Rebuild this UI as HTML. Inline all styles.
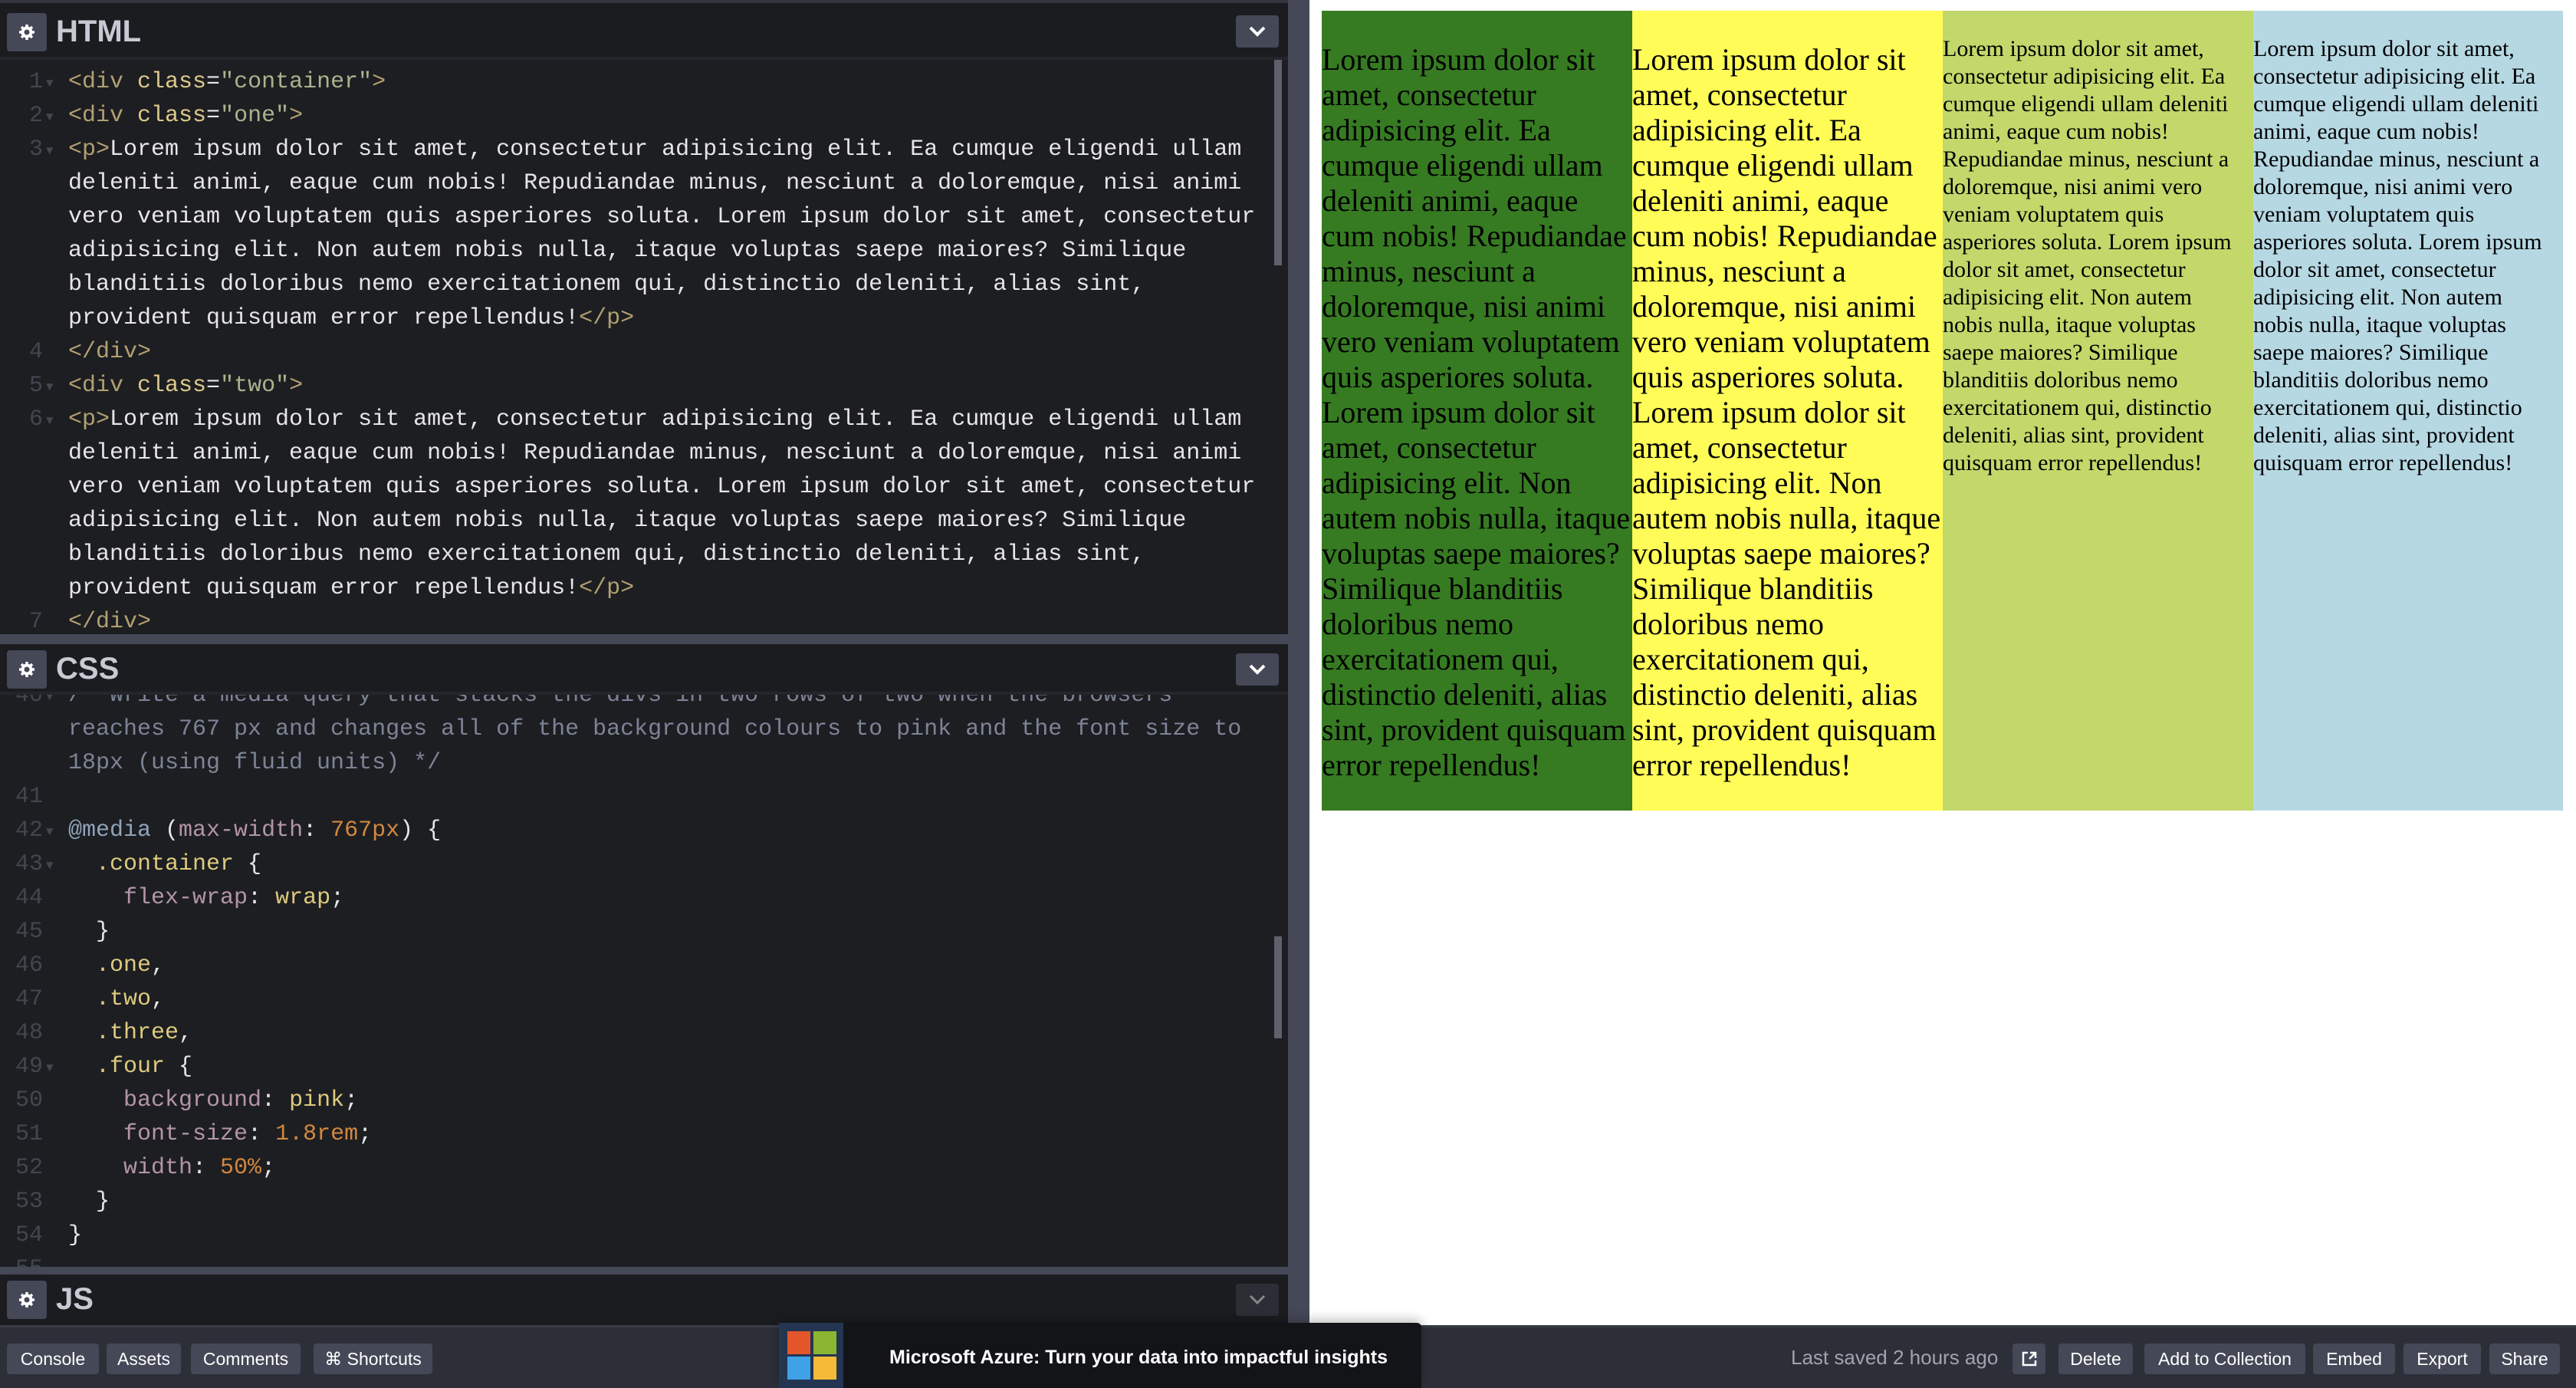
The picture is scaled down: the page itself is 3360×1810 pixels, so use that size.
<!DOCTYPE html>
<html><head><meta charset="utf-8">
<style>
*{margin:0;padding:0;box-sizing:border-box}
body{width:3360px;height:1810px;overflow:hidden;background:#fff;position:relative;font-family:"Liberation Sans",sans-serif}
.abs{position:absolute}
.pane{position:absolute;left:0;width:1680px;background:#1d1e22;overflow:hidden}
.hdr{position:absolute;left:0;width:1680px;background:#1b1c20;border-bottom:4px solid #25262b}
.gear{position:absolute;left:9px;width:52px;height:50px;background:#444857;border-radius:4px}
.gear svg{position:absolute;left:15px;top:14px}
.ttl{position:absolute;left:73px;color:#c7c9d3;font-size:40px;font-weight:bold}
.chev{position:absolute;left:1612px;width:56px;height:42px;background:#444857;border-radius:4px}
.chev svg{position:absolute;left:16px;top:11px}
.code{position:absolute;left:0;width:1660px;font-family:"Liberation Mono",monospace;font-size:30px;line-height:44px;white-space:pre;color:#e6e6e6}
.ln{position:absolute;left:0;width:56px;text-align:right;color:#44464f}
.fd{position:absolute;left:60px;color:#44464f;font-size:16px}
.tx{position:absolute;left:89px}
.tg{color:#b2a071}.at{color:#dcc98a}.vl{color:#a7b58c}
.cm{color:#7c8496}.kw{color:#8fa4ba}.pr{color:#b394aa}.yv{color:#ddca7e}.nm{color:#d2883e}
.sb{position:absolute;left:1662px;width:10px;background:#5e616d}
.col{position:absolute;top:14px;height:1043px;width:405px;font-family:"Liberation Serif",serif;color:#000;white-space:nowrap}
.big{font-size:40px;line-height:46px;padding-top:41px}
.sm{font-size:30px;line-height:36px;padding-top:32px}
.btn{position:absolute;top:1752px;height:40px;background:#444857;border-radius:4px;color:#fff;font-size:23px;line-height:40px;text-align:center}
</style></head><body>
<svg width="0" height="0" style="position:absolute"><defs><g id="g"><circle cx="11" cy="11" r="5.5" fill="none" stroke="#fff" stroke-width="4"/><path d="M11 1v5M11 16v5M1 11h5M16 11h5M4 4l3.5 3.5M14.5 14.5L18 18M18 4l-3.5 3.5M7.5 14.5L4 18" stroke="#fff" stroke-width="3.5"/></g></defs></svg>
<div class="abs" style="left:0;top:0;width:1680px;height:4px;background:#33353d"></div>
<!-- HTML pane -->
<div class="pane" style="top:4px;height:823px;">
  <div class="code" style="top:81px">
    <div class="ln" style="top:0">1</div><div class="fd" style="top:2px">▼</div>
    <div class="ln" style="top:44px">2</div><div class="fd" style="top:46px">▼</div>
    <div class="ln" style="top:88px">3</div><div class="fd" style="top:90px">▼</div>
    <div class="ln" style="top:352px">4</div>
    <div class="ln" style="top:396px">5</div><div class="fd" style="top:398px">▼</div>
    <div class="ln" style="top:440px">6</div><div class="fd" style="top:442px">▼</div>
    <div class="ln" style="top:704px">7</div>
    <div class="tx" style="top:0"><span class="tg">&lt;div</span> <span class="at">class</span>=<span class="vl">"container"</span><span class="tg">&gt;</span>
<span class="tg">&lt;div</span> <span class="at">class</span>=<span class="vl">"one"</span><span class="tg">&gt;</span>
<span class="tg">&lt;p&gt;</span>Lorem ipsum dolor sit amet, consectetur adipisicing elit. Ea cumque eligendi ullam
deleniti animi, eaque cum nobis! Repudiandae minus, nesciunt a doloremque, nisi animi
vero veniam voluptatem quis asperiores soluta. Lorem ipsum dolor sit amet, consectetur
adipisicing elit. Non autem nobis nulla, itaque voluptas saepe maiores? Similique
blanditiis doloribus nemo exercitationem qui, distinctio deleniti, alias sint,
provident quisquam error repellendus!<span class="tg">&lt;/p&gt;</span>
<span class="tg">&lt;/div&gt;</span>
<span class="tg">&lt;div</span> <span class="at">class</span>=<span class="vl">"two"</span><span class="tg">&gt;</span>
<span class="tg">&lt;p&gt;</span>Lorem ipsum dolor sit amet, consectetur adipisicing elit. Ea cumque eligendi ullam
deleniti animi, eaque cum nobis! Repudiandae minus, nesciunt a doloremque, nisi animi
vero veniam voluptatem quis asperiores soluta. Lorem ipsum dolor sit amet, consectetur
adipisicing elit. Non autem nobis nulla, itaque voluptas saepe maiores? Similique
blanditiis doloribus nemo exercitationem qui, distinctio deleniti, alias sint,
provident quisquam error repellendus!<span class="tg">&lt;/p&gt;</span>
<span class="tg">&lt;/div&gt;</span></div>
  </div>
  <div class="sb" style="top:72px;height:270px"></div>
</div>
<div class="hdr" style="top:4px;height:74px">
  <div class="gear" style="top:13px"><svg width="22" height="22"><use href="#g"/></svg></div><div class="ttl" style="top:15px">HTML</div>
  <div class="chev" style="top:16px"><svg width="24" height="20" viewBox="0 0 24 20"><path d="M3 5 L12 14 L21 5" stroke="#fff" stroke-width="4" fill="none"/></svg></div>
</div>
<div class="abs" style="left:0;top:827px;width:1680px;height:13px;background:#444857"></div>
<!-- CSS pane -->
<div class="pane" style="top:906px;height:748px;">
  <div class="code" style="top:-21px">
    <div class="ln" style="top:0">40</div><div class="fd" style="top:2px">▼</div>
    <div class="ln" style="top:132px">41</div>
    <div class="ln" style="top:176px">42</div><div class="fd" style="top:178px">▼</div>
    <div class="ln" style="top:220px">43</div><div class="fd" style="top:222px">▼</div>
    <div class="ln" style="top:264px">44</div>
    <div class="ln" style="top:308px">45</div>
    <div class="ln" style="top:352px">46</div>
    <div class="ln" style="top:396px">47</div>
    <div class="ln" style="top:440px">48</div>
    <div class="ln" style="top:484px">49</div><div class="fd" style="top:486px">▼</div>
    <div class="ln" style="top:528px">50</div>
    <div class="ln" style="top:572px">51</div>
    <div class="ln" style="top:616px">52</div>
    <div class="ln" style="top:660px">53</div>
    <div class="ln" style="top:704px">54</div>
    <div class="ln" style="top:748px">55</div>
    <div class="tx" style="top:0"><span class="cm">/* Write a media query that stacks the divs in two rows of two when the browsers
reaches 767 px and changes all of the background colours to pink and the font size to
18px (using fluid units) */</span>

<span class="kw">@media</span> (<span class="pr">max-width</span>: <span class="nm">767px</span>) {
  <span class="yv">.container</span> {
    <span class="pr">flex-wrap</span>: <span class="yv">wrap</span>;
  }
  <span class="yv">.one</span>,
  <span class="yv">.two</span>,
  <span class="yv">.three</span>,
  <span class="yv">.four</span> {
    <span class="pr">background</span>: <span class="yv">pink</span>;
    <span class="pr">font-size</span>: <span class="nm">1.8rem</span>;
    <span class="pr">width</span>: <span class="nm">50%</span>;
  }
}</div>
  </div>
  <div class="sb" style="top:315px;height:133px"></div>
</div>
<div class="hdr" style="top:840px;height:66px">
  <div class="gear" style="top:8px"><svg width="22" height="22"><use href="#g"/></svg></div><div class="ttl" style="top:10px">CSS</div>
  <div class="chev" style="top:12px"><svg width="24" height="20" viewBox="0 0 24 20"><path d="M3 5 L12 14 L21 5" stroke="#fff" stroke-width="4" fill="none"/></svg></div>
</div>
<div class="abs" style="left:0;top:1652px;width:1680px;height:10px;background:#444857"></div>
<div class="hdr" style="top:1662px;height:66px;border-bottom:none">
  <div class="gear" style="top:8px"><svg width="22" height="22"><use href="#g"/></svg></div><div class="ttl" style="top:10px">JS</div>
  <div class="chev" style="top:12px;background:#2c2e36"><svg width="24" height="20" viewBox="0 0 24 20"><path d="M3 5 L12 14 L21 5" stroke="#888" stroke-width="3" fill="none"/></svg></div>
</div>
<!-- separator -->
<div class="abs" style="left:1680px;top:0;width:28px;height:1730px;background:#454857"></div>
<!-- preview -->
<div class="col big" style="left:1724px;background:#367b22">Lorem ipsum dolor sit<br>amet, consectetur<br>adipisicing elit. Ea<br>cumque eligendi ullam<br>deleniti animi, eaque<br>cum nobis! Repudiandae<br>minus, nesciunt a<br>doloremque, nisi animi<br>vero veniam voluptatem<br>quis asperiores soluta.<br>Lorem ipsum dolor sit<br>amet, consectetur<br>adipisicing elit. Non<br>autem nobis nulla, itaque<br>voluptas saepe maiores?<br>Similique blanditiis<br>doloribus nemo<br>exercitationem qui,<br>distinctio deleniti, alias<br>sint, provident quisquam<br>error repellendus!</div>
<div class="col big" style="left:2129px;background:#fffb57">Lorem ipsum dolor sit<br>amet, consectetur<br>adipisicing elit. Ea<br>cumque eligendi ullam<br>deleniti animi, eaque<br>cum nobis! Repudiandae<br>minus, nesciunt a<br>doloremque, nisi animi<br>vero veniam voluptatem<br>quis asperiores soluta.<br>Lorem ipsum dolor sit<br>amet, consectetur<br>adipisicing elit. Non<br>autem nobis nulla, itaque<br>voluptas saepe maiores?<br>Similique blanditiis<br>doloribus nemo<br>exercitationem qui,<br>distinctio deleniti, alias<br>sint, provident quisquam<br>error repellendus!</div>
<div class="col sm" style="left:2534px;background:#c3d86a">Lorem ipsum dolor sit amet,<br>consectetur adipisicing elit. Ea<br>cumque eligendi ullam deleniti<br>animi, eaque cum nobis!<br>Repudiandae minus, nesciunt a<br>doloremque, nisi animi vero<br>veniam voluptatem quis<br>asperiores soluta. Lorem ipsum<br>dolor sit amet, consectetur<br>adipisicing elit. Non autem<br>nobis nulla, itaque voluptas<br>saepe maiores? Similique<br>blanditiis doloribus nemo<br>exercitationem qui, distinctio<br>deleniti, alias sint, provident<br>quisquam error repellendus!</div>
<div class="col sm" style="left:2939px;width:404px;background:#b6d8e3">Lorem ipsum dolor sit amet,<br>consectetur adipisicing elit. Ea<br>cumque eligendi ullam deleniti<br>animi, eaque cum nobis!<br>Repudiandae minus, nesciunt a<br>doloremque, nisi animi vero<br>veniam voluptatem quis<br>asperiores soluta. Lorem ipsum<br>dolor sit amet, consectetur<br>adipisicing elit. Non autem<br>nobis nulla, itaque voluptas<br>saepe maiores? Similique<br>blanditiis doloribus nemo<br>exercitationem qui, distinctio<br>deleniti, alias sint, provident<br>quisquam error repellendus!</div>
<!-- bottom bar -->
<div class="abs" style="left:0;top:1728px;width:3360px;height:82px;background:#2c2f38;border-top:3px solid #3a3d47"></div>
<div class="btn" style="left:9px;width:120px">Console</div>
<div class="btn" style="left:139px;width:97px">Assets</div>
<div class="btn" style="left:249px;width:143px">Comments</div>
<div class="btn" style="left:409px;width:155px">⌘ Shortcuts</div>
<div class="abs" style="left:1016px;top:1725px;width:838px;height:85px;background:#131417;border-radius:0 6px 0 0;box-shadow:0 -4px 14px rgba(0,0,0,.25)"></div>
<div class="abs" style="left:1016px;top:1725px;width:84px;height:85px;background:#243552"></div>
<div class="abs" style="left:1027px;top:1736px;width:30px;height:30px;background:#e3562b"></div>
<div class="abs" style="left:1061px;top:1736px;width:30px;height:30px;background:#8ab631"></div>
<div class="abs" style="left:1027px;top:1769px;width:30px;height:30px;background:#3fa2e6"></div>
<div class="abs" style="left:1061px;top:1769px;width:30px;height:30px;background:#f5ba38"></div>
<div class="abs" style="left:1160px;top:1753px;color:#fff;font-size:25px;font-weight:bold;line-height:34px">Microsoft Azure: Turn your data into impactful insights</div>
<div class="abs" style="left:2336px;top:1753px;color:#a0a3ad;font-size:26px;line-height:34px">Last saved 2 hours ago</div>
<div class="btn" style="left:2625px;width:43px"><svg width="22" height="22" viewBox="0 0 22 22" style="margin-top:9px"><path d="M9 3H3v16h16v-6" stroke="#fff" stroke-width="2.5" fill="none"/><path d="M12 3h7v7M19 3l-8 8" stroke="#fff" stroke-width="2.5" fill="none"/></svg></div>
<div class="btn" style="left:2685px;width:97px">Delete</div>
<div class="btn" style="left:2797px;width:210px">Add to Collection</div>
<div class="btn" style="left:3017px;width:107px">Embed</div>
<div class="btn" style="left:3135px;width:101px">Export</div>
<div class="btn" style="left:3247px;width:92px">Share</div>
</body></html>
